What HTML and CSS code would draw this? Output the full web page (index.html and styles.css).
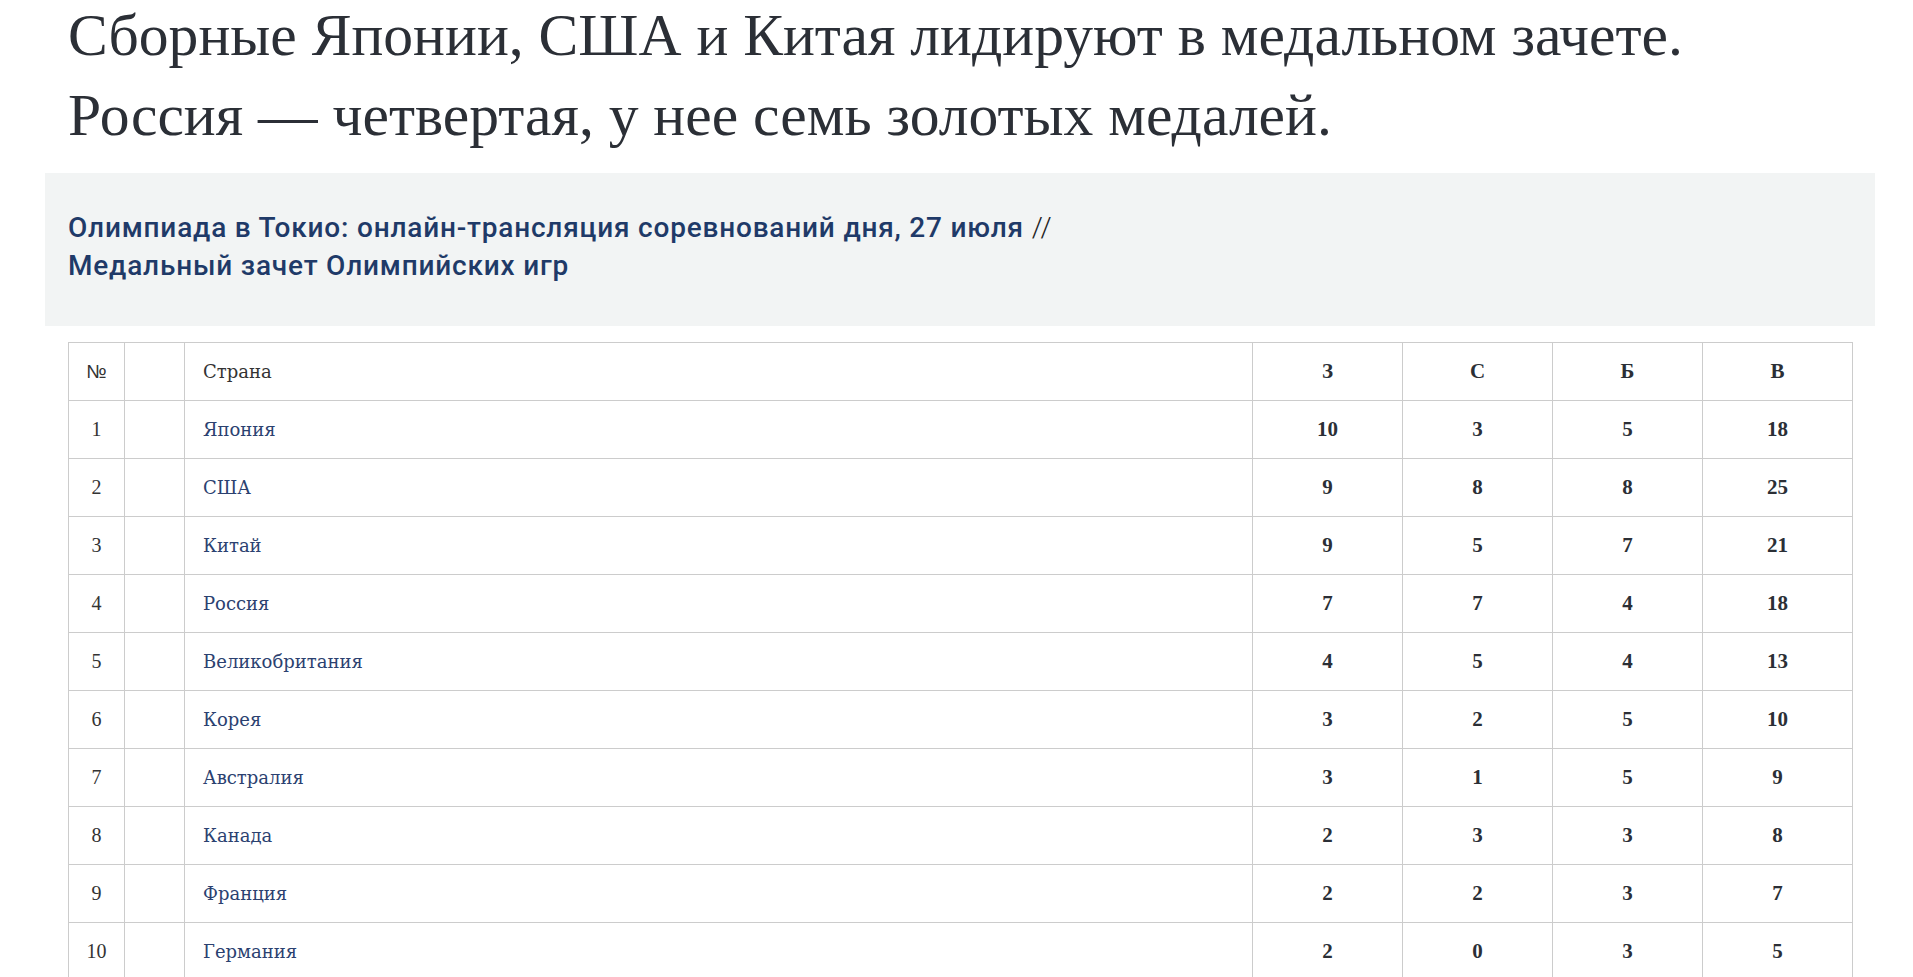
FILE: index.html
```html
<!DOCTYPE html>
<html lang="ru">
<head>
<meta charset="utf-8">
<link rel="stylesheet" href="styles.css">
</head>
<body>
<div class="article">
  <h1 class="title">Сборные Японии, США и Китая лидируют в медальном зачете. Россия — четвертая, у нее семь золотых медалей.</h1>
  <div class="related">
    <a class="related-link" href="#">Олимпиада в Токио: онлайн-трансляция соревнований дня, 27 июля</a> <span class="sep">//</span><br>
    <a class="related-link" href="#">Медальный зачет Олимпийских игр</a>
  </div>
  <table class="medals">
    <colgroup>
      <col class="c-num"><col class="c-flag"><col class="c-country"><col class="c-m"><col class="c-m"><col class="c-m"><col class="c-m">
    </colgroup>
    <thead>
      <tr><th class="num">№</th><th></th><th class="country">Страна</th><th class="m">З</th><th class="m">С</th><th class="m">Б</th><th class="m">В</th></tr>
    </thead>
    <tbody>
      <tr><td class="num">1</td><td></td><td class="country"><a href="#">Япония</a></td><td class="m">10</td><td class="m">3</td><td class="m">5</td><td class="m">18</td></tr>
      <tr><td class="num">2</td><td></td><td class="country"><a href="#">США</a></td><td class="m">9</td><td class="m">8</td><td class="m">8</td><td class="m">25</td></tr>
      <tr><td class="num">3</td><td></td><td class="country"><a href="#">Китай</a></td><td class="m">9</td><td class="m">5</td><td class="m">7</td><td class="m">21</td></tr>
      <tr><td class="num">4</td><td></td><td class="country"><a href="#">Россия</a></td><td class="m">7</td><td class="m">7</td><td class="m">4</td><td class="m">18</td></tr>
      <tr><td class="num">5</td><td></td><td class="country"><a href="#">Великобритания</a></td><td class="m">4</td><td class="m">5</td><td class="m">4</td><td class="m">13</td></tr>
      <tr><td class="num">6</td><td></td><td class="country"><a href="#">Корея</a></td><td class="m">3</td><td class="m">2</td><td class="m">5</td><td class="m">10</td></tr>
      <tr><td class="num">7</td><td></td><td class="country"><a href="#">Австралия</a></td><td class="m">3</td><td class="m">1</td><td class="m">5</td><td class="m">9</td></tr>
      <tr><td class="num">8</td><td></td><td class="country"><a href="#">Канада</a></td><td class="m">2</td><td class="m">3</td><td class="m">3</td><td class="m">8</td></tr>
      <tr><td class="num">9</td><td></td><td class="country"><a href="#">Франция</a></td><td class="m">2</td><td class="m">2</td><td class="m">3</td><td class="m">7</td></tr>
      <tr><td class="num">10</td><td></td><td class="country"><a href="#">Германия</a></td><td class="m">2</td><td class="m">0</td><td class="m">3</td><td class="m">5</td></tr>
    </tbody>
  </table>
</div>
</body>
</html>
```

FILE: styles.css
```css
html, body {
  margin: 0;
  padding: 0;
  background: #ffffff;
}
body {
  overflow: hidden;
}
.article {
  padding: 0 38px 0 45px;
}
.title {
  margin: -5px 0 0 0;
  padding: 0 23px;
  font-family: "Liberation Serif", "DejaVu Serif", serif;
  font-weight: 400;
  font-size: 59.6px;
  line-height: 80px;
  color: #2b2f36;
}
.related {
  margin-top: 18px;
  background: #f2f4f4;
  padding: 36px 23px 41px;
  font-family: Roboto, "Liberation Sans", sans-serif;
  font-weight: 500;
  font-size: 28px;
  letter-spacing: 0.8px;
  line-height: 38px;
  color: #1f3a68;
}
.related-link {
  color: #1f3a68;
  text-decoration: none;
}
.sep {
  color: #222;
  font-weight: 300;
}
.medals {
  margin: 16px 23px 0;
  width: 1784px;
  border-collapse: collapse;
  table-layout: fixed;
  font-family: "DejaVu Serif", "Liberation Serif", serif;
  font-size: 18px;
  color: #333;
}
.c-num { width: 56px; }
.c-flag { width: 60px; }
.c-country { width: 1068px; }
.c-m { width: 150px; }
.medals th, .medals td {
  border: 1px solid #cccccc;
  height: 57px;
  padding: 0;
  font-weight: 400;
  vertical-align: middle;
}
.medals .num {
  text-align: center;
  font-family: "Liberation Serif", serif;
  font-size: 20px;
}
.medals th.num {
  font-family: "Liberation Sans", sans-serif;
  font-size: 19px;
}
.medals .country { text-align: left; padding-left: 18px; }
.medals .m {
  text-align: center;
  font-family: "Liberation Serif", serif;
  font-size: 21px;
  font-weight: 700;
  color: #2b2f36;
}
.medals .country a {
  color: #2b4170;
  text-decoration: none;
}
```
